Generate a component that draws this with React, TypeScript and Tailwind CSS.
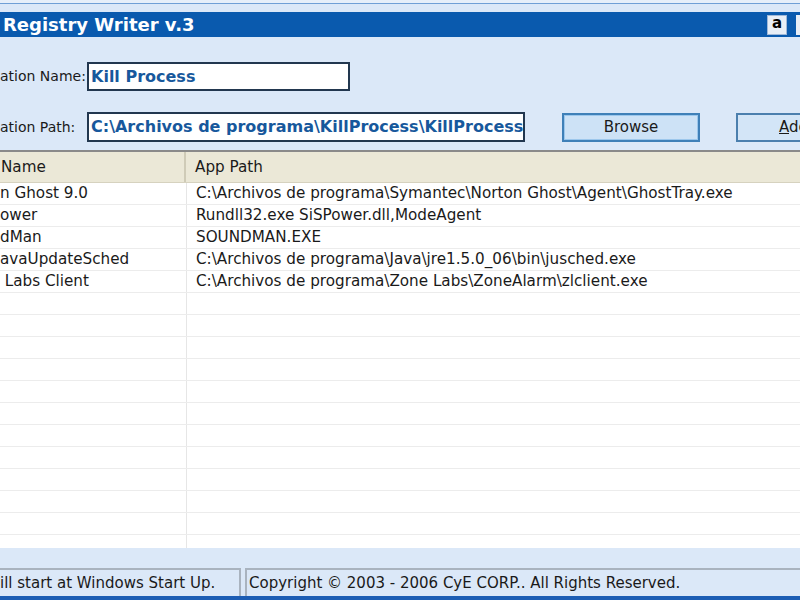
import React from 'react';

const rows = [
  { name: 'n Ghost 9.0', path: 'C:\\Archivos de programa\\Symantec\\Norton Ghost\\Agent\\GhostTray.exe' },
  { name: 'ower', path: 'Rundll32.exe SiSPower.dll,ModeAgent' },
  { name: 'dMan', path: 'SOUNDMAN.EXE' },
  { name: 'avaUpdateSched', path: 'C:\\Archivos de programa\\Java\\jre1.5.0_06\\bin\\jusched.exe' },
  { name: ' Labs Client', path: 'C:\\Archivos de programa\\Zone Labs\\ZoneAlarm\\zlclient.exe' },
];

const emptyRows = Array.from({ length: 12 });

export default function App() {
  return (
    <div className="w-[800px] h-[600px] overflow-hidden flex flex-col bg-[#dbe8f8] text-[#1a1a1a] font-['DejaVu_Sans',sans-serif]">
      {/* window top edge */}
      <div className="h-[3px] shrink-0 bg-[#e6effa]" />
      <div className="h-[1px] shrink-0 bg-[#6f9fd6]" />
      <div className="h-[8px] shrink-0" />

      {/* title bar */}
      <div className="h-[25px] shrink-0 bg-[#0a5aae] flex items-center justify-between">
        <span className="pl-[3px] text-white font-bold text-[18px] leading-none whitespace-nowrap">Registry Writer v.3</span>
        <div className="flex items-center gap-[9px]">
          <div className="w-[20px] h-[20px] bg-[#e8eef6] border border-[#9fb8d8] flex items-center justify-center text-black font-bold text-[15px] leading-none pb-[2px]">a</div>
          <div className="w-[4px] h-[20px] bg-[#e8eef6]" />
        </div>
      </div>

      {/* form */}
      <div className="h-[113px] shrink-0 flex flex-col pt-[25px] gap-[21px]">
        <div className="flex items-center h-[29px]">
          <span className="w-[87px] shrink-0 text-[14px] whitespace-nowrap">ation Name:</span>
          <div className="w-[263px] shrink-0 h-[29px] bg-white border-2 border-[#22374f] flex items-center pl-[2px] text-[#17589c] font-bold text-[16px] whitespace-nowrap">
            Kill Process
          </div>
        </div>
        <div className="flex items-center h-[30px]">
          <span className="w-[87px] shrink-0 text-[14px] whitespace-nowrap">ation Path:</span>
          <div className="w-[438px] shrink-0 h-[30px] bg-white border-2 border-[#22374f] flex items-center pl-[2px] text-[#17589c] font-bold text-[16px] whitespace-nowrap overflow-hidden">
            C:\Archivos de programa\KillProcess\KillProcess
          </div>
          <button className="ml-[37px] shrink-0 w-[138px] h-[29px] border-2 border-[#3f80b8] bg-[#cde2f6] flex items-center justify-center text-[15px] text-[#1a1a1a]">
            <span className="w-full h-full border border-[#9cc7ec] flex items-center justify-center">Browse</span>
          </button>
          <button className="ml-[36px] w-[100px] shrink-0 h-[29px] border-2 border-[#4b7fae] bg-[#d3e5f7] flex items-center pl-[41px] text-[15px] text-[#1a1a1a]">
            <span><span className="underline">A</span>dd</span>
          </button>
        </div>
      </div>

      {/* list */}
      <div className="h-[398px] shrink-0 overflow-hidden bg-white border-t-2 border-[#8a8a8a] flex flex-col text-[15.2px]">
        <div className="h-[31px] shrink-0 bg-[#ebe8d7] border-b border-[#d6d2bf] flex items-center">
          <div className="w-[186px] h-full flex items-center pl-[1px] border-r-2 border-[#cfcbb7]">Name</div>
          <div className="pl-[9px]">App Path</div>
        </div>
        {rows.map((r, i) => (
          <div key={i} className="h-[22px] border-b border-[#ececec] flex items-center shrink-0">
            <div className="w-[187px] h-full flex items-center border-r border-[#e6e6e6] whitespace-pre">{r.name}</div>
            <div className="pl-[9px] whitespace-nowrap">{r.path}</div>
          </div>
        ))}
        {emptyRows.map((_, i) => (
          <div key={i} className="h-[22px] border-b border-[#ececec] flex shrink-0">
            <div className="w-[187px] h-full border-r border-[#e6e6e6]" />
          </div>
        ))}
      </div>

      {/* status bar */}
      <div className="h-[20px] shrink-0" />
      <div className="h-[28px] shrink-0 flex text-[15px]">
        <div className="w-[241px] border-t-2 border-r-2 border-[#a9b3bf] flex items-center whitespace-nowrap">ill start at Windows Start Up.</div>
        <div className="ml-[4px] flex-1 border-t-2 border-l-2 border-[#a9b3bf] flex items-center pl-[2px] whitespace-nowrap">Copyright © 2003 - 2006 CyE CORP.. All Rights Reserved.</div>
      </div>
      <div className="h-[4px] shrink-0 bg-[#1c5db4]" />
    </div>
  );
}
